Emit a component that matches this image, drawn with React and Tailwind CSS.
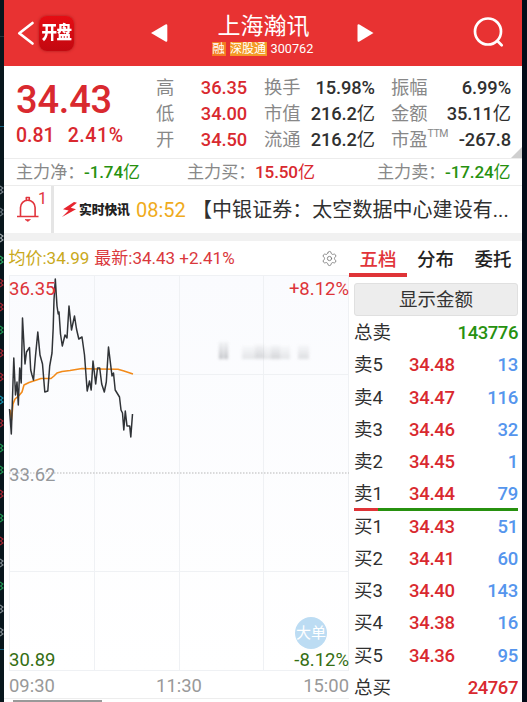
import React from "react";
import { Settings } from "lucide-react";

const stats = [
  {
    box: "w-[91px] ml-[31px]",
    rows: [["高", "36.35"], ["低", "34.00"], ["开", "34.50"]],
    color: "text-[#d9292f]",
  },
  {
    box: "w-[111px] ml-[17px]",
    rows: [["换手", "15.98%"], ["市值", "216.2亿"], ["流通", "216.2亿"]],
    color: "text-[#303030]",
  },
  {
    box: "w-[120px] ml-[16px]",
    rows: [["振幅", "6.99%"], ["金额", "35.11亿"], ["市盈", "-267.8", "TTM"]],
    color: "text-[#303030]",
  },
];

const asks = [
  ["卖5", "34.48", "13"],
  ["卖4", "34.47", "116"],
  ["卖3", "34.46", "32"],
  ["卖2", "34.45", "1"],
  ["卖1", "34.44", "79"],
];

const bids = [
  ["买1", "34.43", "51"],
  ["买2", "34.41", "60"],
  ["买3", "34.40", "143"],
  ["买4", "34.38", "16"],
  ["买5", "34.36", "95"],
];

const edgeMarks = [
  [190, "#78828a"], [212, "#66727a"], [238, "#a0a8ac"], [260, "#2aa760"],
  [283, "#a52632"], [307, "#a52632"], [330, "#1f9450"], [353, "#a52632"],
  [377, "#a52632"], [400, "#1690ac"], [423, "#a52632"], [448, "#1f9450"],
  [470, "#1f9450"], [494, "#a52632"], [518, "#1f9450"], [541, "#a52632"],
  [563, "#808a90"], [586, "#1f9450"], [609, "#808a90"], [632, "#808a90"],
];

function EdgeStrip() {
  return (
    <svg className="h-[702px] w-[4px] shrink-0 bg-[#08161c]" viewBox="0 0 4 702" fill="none">
      <path d="M0 36.5H4" stroke="#26343c" />
      <path d="M0 126.5H4M0 649.5H4" stroke="#14607c" />
      {edgeMarks.map(([y, color]) => (
        <path key={y} d={`M0 ${y - 4}L3 ${y - 2}L.5 ${y}L3 ${y + 2}L0 ${y + 4}`} stroke={color} strokeWidth="1.1" />
      ))}
    </svg>
  );
}

function Header() {
  return (
    <header className="flex h-[66px] items-start bg-[#e83232] text-white">
      <svg className="mt-[20px] ml-[11px] h-[27px] w-[20px]" viewBox="0 0 20 27" fill="none" stroke="currentColor" strokeWidth="2.7" strokeLinecap="round" strokeLinejoin="round">
        <path d="M17.5 3 4.3 13.3 17.5 23.5" />
      </svg>
      <div className="mt-[16px] ml-[4px] flex h-[35px] w-[35px] items-center justify-center rounded-[8px] bg-gradient-to-b from-[#e60c13] to-[#c20810] shadow-[0_0_3px_#a51a1a]">
        <span className="scale-y-[1.2] text-[15.5px] leading-none font-black tracking-[-0.5px] whitespace-nowrap">开盘</span>
      </div>
      <svg className="mt-[24px] ml-[77px] h-[18px] w-[17px]" viewBox="0 0 17 18" fill="currentColor">
        <path d="M0 9 14.5 .4Q16.3-.3 16.3 1.5V16.5Q16.3 18.3 14.5 17.6Z" />
      </svg>
      <div className="ml-[43px] flex w-[105px] flex-col items-center">
        <h1 className="mt-[14px] h-[26px] text-[23px] leading-[26px] whitespace-nowrap">上海瀚讯</h1>
        <div className="mt-[1px] mr-[2px] flex h-[15px] items-center text-[12px] leading-[14px] whitespace-nowrap">
          <span className="h-[14px] w-[14px] bg-[#f47b20] text-center text-[12.5px]">融</span>
          <span className="ml-[4px] h-[14px] w-[37px] bg-[#f49b26] text-center">深股通</span>
          <span className="ml-[4px] text-[12.7px]">300762</span>
        </div>
      </div>
      <svg className="mt-[24px] ml-[41px] h-[18px] w-[17px]" viewBox="0 0 17 18" fill="currentColor">
        <path d="M16.5 9 2.4.5Q.5-.3.5 1.5V16.5Q.5 18.3 2.4 17.5Z" />
      </svg>
      <svg className="mt-[17px] ml-[99px] h-[31px] w-[31px]" viewBox="0 0 31 31" fill="none" stroke="currentColor" strokeWidth="2.7" strokeLinecap="round">
        <circle cx="15" cy="14.5" r="13" />
        <path d="m24.5 24 4.2 4.2" />
      </svg>
    </header>
  );
}

function Quote() {
  return (
    <section className="relative flex h-[93px] border-b border-[#ececec]">
      <div className="w-[121px] pl-[12px] font-medium text-[#d9292f]">
        <div className="mt-[15px] h-[38px] text-[38px] leading-[38px] tracking-[-0.2px]">34.43</div>
        <div className="mt-[6px] flex gap-[13px] text-[19.5px] leading-[22px] whitespace-nowrap">
          <span>0.81</span>
          <span className="tracking-[0.6px]">2.41%</span>
        </div>
      </div>
      {stats.map((col) => (
        <div key={col.rows[0][0]} className={`${col.box} mt-[9px] shrink-0`}>
          {col.rows.map(([label, value, sup]) => (
            <div key={label} className="flex h-[26px] items-center justify-between text-[18.3px] leading-[26px] whitespace-nowrap">
              <span className="flex text-[#888]">
                {label}
                {sup && <span className="-mt-[6px] text-[10.5px] tracking-[-0.5px]">{sup}</span>}
              </span>
              <span className={`font-medium tracking-[-0.1px] ${col.color}`}>
                {value.replace("亿", "")}
                {value.endsWith("亿") && <span className="font-normal">亿</span>}
              </span>
            </div>
          ))}
        </div>
      ))}
      <div className="absolute right-0 bottom-0 h-[11px] w-[11px] bg-[#cfcfcf] [clip-path:polygon(100%_0,100%_100%,0_100%)]" />
    </section>
  );
}

function Flow({ label, value, color, box }) {
  return (
    <div className={`flex whitespace-nowrap ${box}`}>
      <span className="w-[68px] shrink-0 text-[#888]">{label}：</span>
      <span className={`font-medium tracking-[-0.15px] ${color}`}>
        {value}
        <span className="font-normal">亿</span>
      </span>
    </div>
  );
}

function News() {
  return (
    <section className="flex h-[47px] items-center">
      <div className="flex h-full w-[50px] items-start border-r-[3px] border-[#e5e5e5] text-[#e2343c]">
        <svg className="mt-[10px] ml-[12px] h-[26px] w-[24px] shrink-0" viewBox="0 0 24 26" fill="none" stroke="currentColor" strokeWidth="1.6" strokeLinejoin="round">
          <path d="M4.5 20V11.5a7.3 7.3 0 0 1 14.6 0V20M1 20.5H22.5M10.3 4V1.5h3V4" />
          <path d="M9 23.5h5.5l-2.7 2Z" fill="currentColor" strokeWidth=".6" />
        </svg>
        <span className="mt-[6px] ml-[-2px] text-[16px] leading-[14px]">1</span>
      </div>
      <svg className="ml-[8px] h-[15px] w-[15px]" viewBox="0 0 15 15" fill="#e7252e">
        <path d="M12 0 1 7.3l5.6 1.2L0 15l14-7.8-5.2-1.5L15 .8Z" />
      </svg>
      <span className="ml-[2px] w-[51px] text-[12.8px] font-black tracking-[-0.1px] whitespace-nowrap text-[#222]">实时快讯</span>
      <span className="ml-[6px] w-[56px] text-[20px] text-[#efab1c]">08:52</span>
      <span className="w-[322px] text-[20px] tracking-[0.05px] whitespace-nowrap text-[#303030]">【中银证券：太空数据中心建设有...</span>
    </section>
  );
}

function Chart() {
  return (
    <div className="relative h-[396px] text-[18.5px] leading-[22px]">
      <svg className="block h-[396px] w-[345px]" viewBox="4 275 345 396" fill="none">
        <defs>
          <linearGradient id="plot" x1="0" y1="0" x2="0" y2="1">
            <stop offset="0" stopColor="#fafbfe" />
            <stop offset="1" stopColor="#ffffff" />
          </linearGradient>
          <filter id="soft" x="-10%" y="-30%" width="120%" height="160%">
            <feGaussianBlur stdDeviation="1.6" />
          </filter>
          <linearGradient id="fade" x1="0" y1="0" x2="0" y2="1">
            <stop offset="0" stopColor="#b4b6ba" stopOpacity=".2" />
            <stop offset="1" stopColor="#a4a6aa" />
          </linearGradient>
        </defs>
        <rect x="9" y="275" width="340" height="396" fill="url(#plot)" />
        <path d="M9.5 275V671M94.5 275V671M179.5 275V671M263.5 275V671M348.5 275V671M9 275.5H349M9 374.5H349M9 571.5H349M9 670.5H349" stroke="#eff1f4" />
        <path d="M9 473H349" stroke="#b7b7b7" strokeDasharray="1.5 1.5" />
        <g fill="url(#fade)" opacity=".7" filter="url(#soft)">
          <rect x="219" y="342" width="4" height="17" />
          <rect x="224" y="342" width="4" height="17" />
          <rect x="242" y="346" width="48" height="13" opacity=".4" />
          <rect x="255" y="344" width="9" height="14" opacity=".4" />
          <rect x="271" y="345" width="9" height="14" opacity=".4" />
          <rect x="298" y="345" width="11" height="14" opacity=".5" />
        </g>
        <path d="M10 410 11.5 420 13 404 15 399 19 395.5 22 392 24 385 29 382.5 35 380.5 41 378.5 51 378.5 54 376 57 373 62 371.5 70 370.5 82 368.5 96 369 118 369.3 124 371 133 374" stroke="#f28a19" strokeWidth="1.6" strokeLinejoin="round" />
        <path d="M9.5 409 11.3 434 13.8 358 15.5 395 17 382 18.3 405 19.7 368 21.2 383 22.5 318 25 364 26.5 352 29.5 347.5 30.7 370 32 375 33.5 380 35.5 356 37.8 332 40 355 42.5 364 44.8 392 47.8 391 49.7 366 52 353 53.2 328 54 300 55.3 279 57 306 58.2 314 59 312 60.5 334 62.3 346 65 335 67 338 69 306 71.5 330 74.5 316 76.5 329 78.8 339 82 337 84.5 355 87.2 391 89.5 381 91.2 390 93 361 95.7 384 97.5 368 99.7 368 101.7 384 104.3 392 106.3 382 108.5 347 112 376 113.5 373 115.2 390 119.5 397 121 410 122.5 413 123.8 430 125.3 411 127 426 129.7 426 130.8 437 132.5 414" stroke="#303337" strokeWidth="1.5" strokeLinejoin="round" />
      </svg>
      <div className="absolute inset-0 flex flex-col justify-between pl-[5px]">
        <div className="flex justify-between pt-[3px] text-[#dd3439]">
          <span>36.35</span>
          <span>+8.12%</span>
        </div>
        <span className="text-[#94979b]">33.62</span>
        <div className="flex justify-between text-[#356e13]">
          <span>30.89</span>
          <span>-8.12%</span>
        </div>
      </div>
      <div className="absolute top-[342px] left-[291px] flex h-[32px] w-[32px] items-center justify-center rounded-full bg-[#bcdcf3] text-[15px] leading-none whitespace-nowrap text-white">大单</div>
    </div>
  );
}

function Level({ row }) {
  return (
    <div className="flex h-[32.25px] items-center text-[18.5px] leading-[32px]">
      <span className="w-[55px] text-[#303030]">{row[0]}</span>
      <span className="font-medium tracking-[-0.3px] text-[#d9292f]">{row[1]}</span>
      <span className="ml-auto font-medium tracking-[-0.3px] text-[#5595ed]">{row[2]}</span>
    </div>
  );
}

function Total({ label, value, color }) {
  return (
    <div className="flex h-[32.25px] items-center justify-between text-[18.5px] leading-[32px]">
      <span className="text-[#303030]">{label}</span>
      <span className={`font-medium tracking-[-0.45px] ${color}`}>{value}</span>
    </div>
  );
}

function OrderBook() {
  return (
    <aside className="w-[173px]">
      <nav className="flex h-[36px] text-[18.5px] leading-[39px] font-medium text-[#222]">
        <span className="h-[36px] w-[58px] border-b-4 border-[#df3437] text-center text-[#e1353a]">五档</span>
        <span className="w-[57px] text-center">分布</span>
        <span className="w-[58px] text-center">委托</span>
      </nav>
      <div className="pr-[4px] pl-[5px]">
        <button className="mt-[6px] mb-[1px] block h-[33px] w-[164px] rounded-[3px] border border-[#e0e0e0] bg-[#ededed] text-[18.5px] leading-[32px] text-[#333]">显示金额</button>
        <Total label="总卖" value="143776" color="text-[#27910f]" />
        {asks.map((row) => <Level key={row[0]} row={row} />)}
        <div className="-mt-[3px] flex h-[3px]">
          <div className="w-[24px] bg-[#df3437]" />
          <div className="flex-1 bg-[#27910f]" />
        </div>
        {bids.map((row) => <Level key={row[0]} row={row} />)}
        <Total label="总买" value="24767" color="text-[#d9292f]" />
      </div>
    </aside>
  );
}

export default function App() {
  return (
    <div className="flex h-[702px] w-[527px] overflow-hidden bg-[#020b18] font-['Roboto','Noto_Sans_CJK_SC',sans-serif]">
      <EdgeStrip />
      <main className="w-[518px] shrink-0 bg-white">
        <Header />
        <Quote />
        <section className="flex h-[27px] items-center border-b border-[#ececec] pl-[12px] text-[17.1px] leading-[26px]">
          <Flow label="主力净" value="-1.74" color="text-[#27910f]" box="w-[171px]" />
          <Flow label="主力买" value="15.50" color="text-[#d9292f]" box="w-[190px]" />
          <Flow label="主力卖" value="-17.24" color="text-[#27910f]" box="w-[134px]" />
        </section>
        <News />
        <div className="h-[8px] bg-[#f1f1f1]" />
        <div className="flex">
          <div className="w-[345px]">
            <div className="flex h-[34px] items-center pt-[1px] pl-[4.5px] text-[17px] whitespace-nowrap">
              <span className="text-[#c9a91b]">均价:34.99</span>
              <span className="ml-[5px] text-[#da383c]">最新:34.43 +2.41%</span>
              <Settings className="mr-[11px] ml-auto text-[#777]" size={17} strokeWidth={1.2} />
            </div>
            <Chart />
            <div className="flex h-[28px] items-center justify-between border-b border-[#ededed] pt-[3px] pl-[5px] text-[18.4px] text-[#999]">
              <span>09:30</span>
              <span>11:30</span>
              <span>15:00</span>
            </div>
            <div className="mt-[1px] ml-[9px] h-[2px] w-[89px] bg-[#999]" />
          </div>
          <OrderBook />
        </div>
      </main>
    </div>
  );
}
